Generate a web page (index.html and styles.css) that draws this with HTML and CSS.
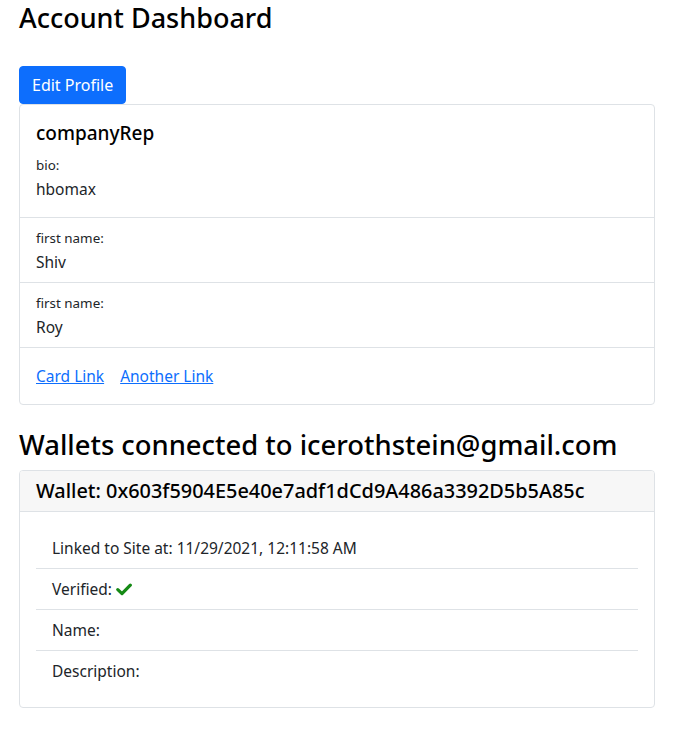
FILE: index.html
```html
<!DOCTYPE html>
<html lang="en">
<head>
<meta charset="utf-8">
<title>Account Dashboard</title>
<link rel="stylesheet" href="styles.css">
</head>
<body>
<div class="page">
  <h1 class="page-title">Account Dashboard</h1>
  <button class="btn-primary" type="button">Edit Profile</button>
  <div class="card">
    <div class="card-body">
      <h5 class="card-title">companyRep</h5>
      <div class="field-label">bio:</div>
      <div class="field-value">hbomax</div>
    </div>
    <ul class="list-group">
      <li class="list-item">
        <div class="field-label">first name:</div>
        <div class="field-value">Shiv</div>
      </li>
      <li class="list-item">
        <div class="field-label">first name:</div>
        <div class="field-value">Roy</div>
      </li>
    </ul>
    <div class="card-body">
      <a class="card-link" href="#">Card Link</a><a class="card-link" href="#">Another Link</a>
    </div>
  </div>

  <h2 class="section-title">Wallets connected to icerothstein@gmail.com</h2>
  <div class="card">
    <div class="card-header">
      <h5 class="header-title">Wallet: 0x603f5904E5e40e7adf1dCd9A486a3392D5b5A85c</h5>
    </div>
    <div class="card-body">
      <ul class="list-flush">
        <li class="flush-item">Linked to Site at: 11/29/2021, 12:11:58 AM</li>
        <li class="flush-item">Verified: <svg class="check" width="16" height="13" viewBox="0 0 16 13" aria-hidden="true"><polyline points="1.8,6.6 6,10.6 14.3,2.2" fill="none" stroke="#158a15" stroke-width="3.2" stroke-linecap="round" stroke-linejoin="round"/></svg></li>
        <li class="flush-item">Name:</li>
        <li class="flush-item">Description:</li>
      </ul>
    </div>
  </div>
</div>
</body>
</html>
```

FILE: styles.css
```css
* { box-sizing: border-box; }

html, body {
  margin: 0;
  padding: 0;
  background: #fff;
}

body {
  font-family: "Noto Sans", "Open Sans", sans-serif;
  font-size: 15.5px;
  line-height: 24px;
  color: #212529;
}

.page {
  padding: 2px 24px 0 19px;
}

.page-title {
  margin: 0 0 32px;
  font-size: 27px;
  font-weight: 500;
  line-height: 1.2;
  color: #000;
}

.btn-primary {
  display: block;
  height: 38px;
  padding: 6px 12px;
  font: inherit;
  font-size: 16px;
  line-height: 24px;
  color: #fff;
  background: #0d6efd;
  border: 1px solid #0d6efd;
  border-radius: 4px;
}

.card {
  display: flex;
  flex-direction: column;
  border: 1px solid #dee2e6;
  border-radius: 4px;
  background: #fff;
}

.card-body {
  padding: 16px;
}

.card-title {
  margin: 0 0 8px;
  font-size: 19px;
  font-weight: 500;
  line-height: 24px;
  color: #000;
}

.field-label {
  font-size: 13.4px;
  line-height: 24px;
}

.field-value {
  line-height: 24px;
}

.list-group {
  list-style: none;
  margin: 0;
  padding: 0;
}

.list-item {
  padding: 8px 16px;
  border-top: 1px solid #dee2e6;
}

.list-item:last-child {
  border-bottom: 1px solid #dee2e6;
}

.card-link {
  color: #0d6efd;
  text-decoration: underline;
}

.card-link + .card-link {
  margin-left: 16px;
}

.section-title {
  margin: 24px 0 8px;
  font-size: 27.4px;
  font-weight: 500;
  line-height: 1.2;
  color: #000;
}

.card-header {
  padding: 8px 16px;
  background: #f7f7f7;
  border-bottom: 1px solid #dee2e6;
  border-radius: 3px 3px 0 0;
}

.header-title {
  margin: 0;
  font-size: 19.9px;
  font-weight: 500;
  line-height: 24px;
  color: #000;
}

.list-flush {
  list-style: none;
  margin: 0;
  padding: 0;
}

.flush-item {
  padding: 8px 16px;
  line-height: 24px;
  border-bottom: 1px solid #dee2e6;
}

.flush-item:last-child {
  border-bottom: 0;
}

.check {
  vertical-align: -1px;
}
```
